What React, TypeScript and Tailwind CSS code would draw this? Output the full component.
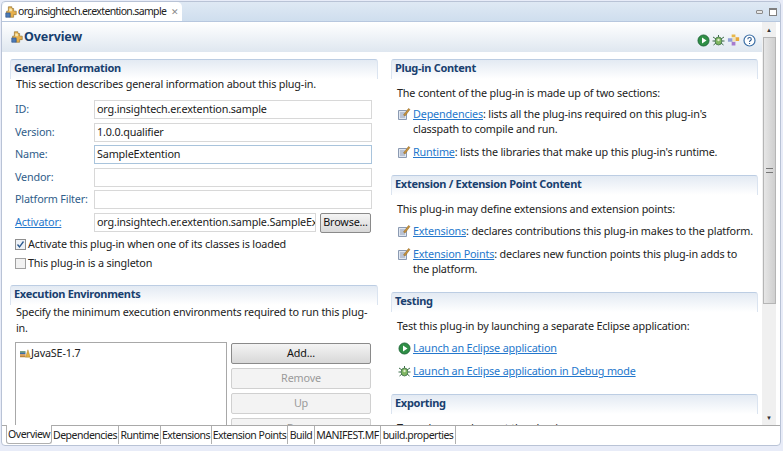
const textFont = "font-['Noto_Sans','Open_Sans',sans-serif]";

function PluginIcon() {
  return (
    <svg width="14" height="14" viewBox="0 0 16 16" className="shrink-0">
      <path d="M5 2h4v2h2v3h3v4h-3v3H7v-3H3V7h2z" fill="#e8b04a" stroke="#8a6a2a" strokeWidth="0.7" />
      <path d="M2 9h5v5H2z" fill="#4d7ab5" stroke="#2c4f86" strokeWidth="0.7" />
      <path d="M6 4h3v3H6z" fill="#f7e7b0" />
    </svg>
  );
}

function NoteIcon() {
  return (
    <svg width="14" height="14" viewBox="0 0 14 14" className="shrink-0">
      <path d="M1.5 3.5h8v9h-8z" fill="#dfe6f0" stroke="#8b9ab2" />
      <path d="M3 6h5M3 8h5M3 10h5" stroke="#7d8ca6" strokeWidth="0.8" />
      <path d="M6.5 8 11.5 1.5l1.5 1L8 9z" fill="#c9933a" stroke="#8a6224" strokeWidth="0.5" />
    </svg>
  );
}

function RunIcon() {
  return (
    <svg width="13" height="13" viewBox="0 0 13 13" className="shrink-0">
      <circle cx="6.5" cy="6.5" r="5.5" fill="#2f8f46" stroke="#22693a" />
      <path d="M5 3.5v6l4.5-3z" fill="#fff" />
    </svg>
  );
}

function BugIcon() {
  return (
    <svg width="13" height="13" viewBox="0 0 13 13" className="shrink-0">
      <path d="M1 3l3 2M12 3 9 5M0.5 7h3M12.5 7h-3M1.5 11 4 9M11.5 11 9 9M6.5 1v2" stroke="#3f6f4c" strokeWidth="1" />
      <ellipse cx="6.5" cy="7" rx="3.4" ry="4" fill="#7fb561" stroke="#3f6f4c" strokeWidth="0.8" />
      <circle cx="6.5" cy="6" r="1.2" fill="#dfeecf" />
    </svg>
  );
}

function PuzzleIcon() {
  return (
    <svg width="14" height="14" viewBox="0 0 15 14" className="shrink-0">
      <path d="M5 1h4v3H5z" fill="#e8b84a" />
      <path d="M9 4h4v4H9z" fill="#e8a93a" />
      <path d="M1 5h5v4H1z" fill="#8f9fd6" />
      <path d="M5 9h4v4H5z" fill="#a67ccf" />
      <path d="M6 4h3v5H6z" fill="#f2e4b8" />
    </svg>
  );
}

function HelpIcon() {
  return (
    <svg width="13" height="13" viewBox="0 0 13 13" className="shrink-0">
      <circle cx="6.5" cy="6.5" r="5.5" fill="#fff" stroke="#3a6ea5" strokeWidth="1.2" />
      <path d="M4.8 5.2c0-2.2 3.5-2.2 3.5 0 0 1.3-1.8 1.3-1.8 2.8" fill="none" stroke="#2c5a90" strokeWidth="1.1" />
      <path d="M6 9h1.1v1.1H6z" fill="#2c5a90" />
    </svg>
  );
}

function JreIcon() {
  return (
    <svg width="11" height="9" viewBox="0 0 16 12" className="mt-[4px] shrink-0" preserveAspectRatio="none">
      <path d="M0 3h8v2H0z" fill="#4a7d5a" />
      <path d="M0 5h8v2H0z" fill="#3c6da6" />
      <path d="M0 7h8v2H0z" fill="#d98b3a" />
      <path d="M0 9h8v2H0z" fill="#b9863f" />
      <path d="M8 11 11.5 1 15 11z" fill="#e3b13f" stroke="#a87b25" strokeWidth="0.6" />
    </svg>
  );
}

function SectionHeader({ title }: { title: string }) {
  return (
    <div className="h-5 rounded-t-[3px] border-t border-x border-t-[#bccde3] border-x-[#dbe4f0] bg-gradient-to-b from-[#e3eaf3] to-white px-[3px] text-[11px] leading-[15px] font-bold tracking-[-0.3px] text-[#19406f]">
      {title}
    </div>
  );
}

function Field({ label, value, focus }: { label: string; value?: string; focus?: boolean }) {
  return (
    <div className="flex h-[22.6px] items-start">
      <div className="w-[79px] whitespace-nowrap leading-[17px] text-[#2f5d8a]">{label}</div>
      <div className={`h-[19px] w-[278px] border bg-white pl-[2px] leading-[15px] text-[#1a1a1a] ${focus ? "border-[#a9c4dc]" : "border-[#d8d8d8]"}`}>
        {value}
      </div>
    </div>
  );
}

function SideButton({ label, disabled }: { label: string; disabled?: boolean }) {
  return (
    <div
      className={`h-[21px] shrink-0 rounded-[2px] border text-center leading-[18px] ${
        disabled
          ? "border-[#d0d0d0] bg-[#f3f3f3] text-[#9a9a9a]"
          : "border-[#8a8a8a] bg-gradient-to-b from-[#f4f4f4] to-[#d8d8d8] text-[#111]"
      }`}
    >
      {label}
    </div>
  );
}

function LinkRow({ icon, link, rest, cont }: { icon: React.ReactNode; link: string; rest?: string; cont?: string }) {
  return (
    <div className="flex gap-[4px] pl-[8px]">
      <div className="flex h-[16px] w-[10px] shrink-0 items-center justify-center">{icon}</div>
      <div className="leading-[15px]">
        <div className="whitespace-nowrap">
          <span className="text-[#2477cc] underline">{link}</span>
          {rest}
        </div>
        {cont && <div className="whitespace-nowrap">{cont}</div>}
      </div>
    </div>
  );
}

const tabs = [
  { label: "Dependencies", w: "w-[67px]" },
  { label: "Runtime", w: "w-[42px]" },
  { label: "Extensions", w: "w-[51px]" },
  { label: "Extension Points", w: "w-[76px]" },
  { label: "Build", w: "w-[27px]" },
  { label: "MANIFEST.MF", w: "w-[66px]" },
  { label: "build.properties", w: "w-[75px]" },
];

export default function App() {
  return (
    <div className={`h-[451px] w-[783px] overflow-hidden bg-[#e8ecf8] pl-[1px] pt-[1px] text-[10.8px] tracking-[-0.17px] text-[#222] ${textFont}`}>
      <div className="flex h-[445px] w-[780px] flex-col overflow-hidden rounded-[4px] border border-[#b9c3d6] bg-white">
        {/* editor tab */}
        <div className="flex h-[20px] shrink-0 items-stretch border-b border-[#b7c7de] bg-gradient-to-b from-[#dfe9f4] to-[#cfdeee]">
          <div className="flex w-[180px] items-center rounded-t-[5px] bg-white pl-[2px]">
            <PluginIcon />
            <span className="whitespace-nowrap text-[10.5px] tracking-[-0.66px] text-[#222]">org.insightech.er.extention.sample</span>
            <span className="ml-[5px] text-[9px] leading-none text-[#8a8a8a]">✕</span>
          </div>
          <div className="ml-auto flex items-center gap-[6px] pr-[3px]">
            <div className="h-[4px] w-[7px] rounded-[1px] border border-[#8c8c8c] bg-[#e6e6e6]" />
            <div className="h-[8px] w-[8px] border border-[#7f7f7f] border-t-2 bg-white" />
          </div>
        </div>

        <div className="flex min-h-0 flex-1">
          <div className="min-w-0 flex-1 overflow-hidden">
            {/* form title */}
            <div className="flex h-[30px] items-center bg-gradient-to-b from-white to-[#dfe7f0] pl-[8px] pr-[6px]">
              <PluginIcon />
              <span className="text-[12.5px] font-bold tracking-[-0.1px] text-[#17406f]">Overview</span>
              <div className="ml-auto mt-[6px] flex items-center gap-[2px]">
                <RunIcon />
                <BugIcon />
                <PuzzleIcon />
                <HelpIcon />
              </div>
            </div>

            <div className="flex gap-[13px] pl-[8px] pt-[7px]">
              {/* left column */}
              <div className="w-[368px] shrink-0">
                <SectionHeader title="General Information" />
                <div className="-mt-[3px] pl-[6px] leading-[15px]">This section describes general information about this plug-in.</div>
                <div className="pl-[5px] pt-[9px]">
                  <Field label="ID:" value="org.insightech.er.extention.sample" />
                  <Field label="Version:" value="1.0.0.qualifier" />
                  <Field label="Name:" value="SampleExtention" focus />
                  <Field label="Vendor:" />
                  <Field label="Platform Filter:" />
                  <div className="flex h-[21px] items-start">
                    <div className="w-[79px] leading-[17px] text-[#2477cc] underline">Activator:</div>
                    <div className="h-[19px] w-[222px] overflow-hidden whitespace-nowrap border border-[#d8d8d8] pl-[2px] leading-[15px]">
                      org.insightech.er.extention.sample.SampleEx
                    </div>
                    <div className="ml-[4px] h-[20px] w-[51px] rounded-[2px] border border-[#8a8a8a] bg-gradient-to-b from-[#f4f4f4] to-[#d8d8d8] text-center leading-[16px] text-[#111]">
                      Browse...
                    </div>
                  </div>
                  <div className="mt-[1px] flex h-[19px] items-center gap-[2px]">
                    <div className="flex h-[11px] w-[11px] items-center justify-center border border-[#8e8e8e] bg-[#eef2f7]">
                      <svg width="9" height="9" viewBox="0 0 9 9">
                        <path d="M1.5 4.5 3.5 7l4-5.5" fill="none" stroke="#2c5a90" strokeWidth="1.3" />
                      </svg>
                    </div>
                    <span>Activate this plug-in when one of its classes is loaded</span>
                  </div>
                  <div className="flex h-[19px] items-center gap-[2px]">
                    <div className="h-[11px] w-[11px] border border-[#a0a0a0] bg-[#f2f2f2]" />
                    <span>This plug-in is a singleton</span>
                  </div>
                </div>

                <div className="mt-[12px]">
                  <SectionHeader title="Execution Environments" />
                  <div className="-mt-[1px] pl-[6px] leading-[16px]">
                    Specify the minimum execution environments required to run this plug-
                    <br />
                    in.
                  </div>
                  <div className="flex gap-[4px] pl-[5px] pt-[6px]">
                    <div className="flex h-[100px] w-[212px] items-start border border-[#a8a8a8] pl-[4px] pt-[2px] leading-[15px]">
                      <JreIcon />
                      <span>JavaSE-1.7</span>
                    </div>
                    <div className="flex w-[140px] flex-col gap-[4px] pt-[1px]">
                      <SideButton label="Add..." />
                      <SideButton label="Remove" disabled />
                      <SideButton label="Up" disabled />
                      <SideButton label="Down" disabled />
                    </div>
                  </div>
                </div>
              </div>

              {/* right column */}
              <div className="w-[367px] shrink-0">
                <SectionHeader title="Plug-in Content" />
                <div className="pl-[6px] pt-[6px] leading-[15px]">The content of the plug-in is made up of two sections:</div>
                <div className="flex flex-col gap-[8px] pt-[6px]">
                  <LinkRow icon={<NoteIcon />} link="Dependencies" rest=": lists all the plug-ins required on this plug-in's" cont="classpath to compile and run." />
                  <LinkRow icon={<NoteIcon />} link="Runtime" rest=": lists the libraries that make up this plug-in's runtime." />
                </div>

                <div className="mt-[15px]">
                  <SectionHeader title="Extension / Extension Point Content" />
                  <div className="pl-[6px] pt-[6px] leading-[15px]">This plug-in may define extensions and extension points:</div>
                  <div className="flex flex-col gap-[7px] pt-[7px]">
                    <LinkRow icon={<NoteIcon />} link="Extensions" rest=": declares contributions this plug-in makes to the platform." />
                    <LinkRow icon={<NoteIcon />} link="Extension Points" rest=": declares new function points this plug-in adds to" cont="the platform." />
                  </div>
                </div>

                <div className="mt-[16px]">
                  <SectionHeader title="Testing" />
                  <div className="pl-[6px] pt-[6px] leading-[15px]">Test this plug-in by launching a separate Eclipse application:</div>
                  <div className="flex flex-col gap-[7px] pt-[7px]">
                    <LinkRow icon={<RunIcon />} link="Launch an Eclipse application" />
                    <LinkRow icon={<BugIcon />} link="Launch an Eclipse application in Debug mode" />
                  </div>
                </div>

                <div className="mt-[15px]">
                  <SectionHeader title="Exporting" />
                  <div className="pl-[6px] pt-[6px] leading-[15px]">To package and export the plug-in:</div>
                </div>
              </div>
            </div>
          </div>

          {/* scrollbar */}
          <div className="mr-[4px] flex w-[14px] shrink-0 flex-col items-center bg-[#f0f0f0]">
            <div className="flex h-[15px] items-center text-[6px] leading-none text-[#333]">▲</div>
            <div className="flex h-[267px] w-[13px] items-center justify-center border border-[#b5b5b5] bg-gradient-to-r from-[#e6e6e6] to-[#cfcfcf]">
              <div className="h-[5px] w-[7px] border-y border-[#777]" />
            </div>
            <div className="mt-auto flex h-[15px] items-center text-[6px] leading-none text-[#333]">▼</div>
          </div>
        </div>

        {/* page tabs */}
        <div className="flex h-[20px] shrink-0 border-t border-[#a9a9a9] pl-[4px] text-[10.5px] tracking-[-0.5px]">
          <div className="-mt-px h-[19px] w-[46px] rounded-b-[3px] border-x border-b border-[#b0b0b0] border-t-white bg-white text-center leading-[18px]">
            Overview
          </div>
          {tabs.map((t) => (
            <div key={t.label} className={`${t.w} h-[18px] shrink-0 whitespace-nowrap border-r border-[#b0b0b0] text-center leading-[18px]`}>
              {t.label}
            </div>
          ))}
        </div>
      </div>
    </div>
  );
}
